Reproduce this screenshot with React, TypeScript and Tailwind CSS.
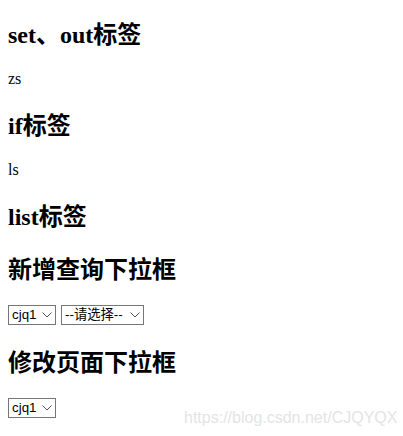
import React from 'react';

const serif = "font-['Liberation_Serif','Times_New_Roman','Noto_Sans_CJK_SC',serif]";

const Heading: React.FC<{ children: React.ReactNode }> = ({ children }) => (
  <h2 className={`${serif} text-2xl font-bold text-black pt-[4px] leading-[29px]`}>{children}</h2>
);

const Text: React.FC<{ children: React.ReactNode }> = ({ children }) => (
  <p className={`${serif} text-base text-black leading-[18px]`}>{children}</p>
);

const Select: React.FC<{ options: string[]; width: string }> = ({ options, width }) => (
  <div className={`relative ${width} h-[20px]`}>
    <select className="block appearance-none w-full h-[20px] border border-[#767676] bg-white pl-[3px] pr-[16px] text-[13.33px] leading-[18px] text-black font-['Liberation_Sans','Arial','Noto_Sans_CJK_SC',sans-serif]">
      {options.map((o) => (
        <option key={o}>{o}</option>
      ))}
    </select>
    {/* chevron */}
    <svg
      className="absolute right-[4px] top-[7px] pointer-events-none"
      width="10"
      height="6"
      viewBox="0 0 10 6"
      fill="none"
    >
      <path d="M0.5 0.5 L5 5 L9.5 0.5" stroke="#555" strokeWidth="1" />
    </svg>
  </div>
);

export default function App() {
  return (
    <div className="relative w-[403px] h-[436px] bg-white overflow-hidden">
      <div className="flex flex-col gap-5 px-2 pt-[17px]">
        <Heading>set、out标签</Heading>
        <Text>zs</Text>
        <Heading>if标签</Heading>
        <Text>ls</Text>
        <Heading>list标签</Heading>
        <Heading>新增查询下拉框</Heading>
        <div className="flex gap-[5px]">
          <Select options={['cjq1']} width="w-[48px]" />
          <Select options={['--请选择--']} width="w-[83px]" />
        </div>
        <Heading>修改页面下拉框</Heading>
        <div className="flex">
          <Select options={['cjq1']} width="w-[48px]" />
        </div>
      </div>
      {/* watermark */}
      <span className="absolute left-[184px] top-[406px] text-[16px] text-[#e4e4e4] font-['Liberation_Sans','Arial',sans-serif]">
        https://blog.csdn.net/CJQYQX
      </span>
    </div>
  );
}
